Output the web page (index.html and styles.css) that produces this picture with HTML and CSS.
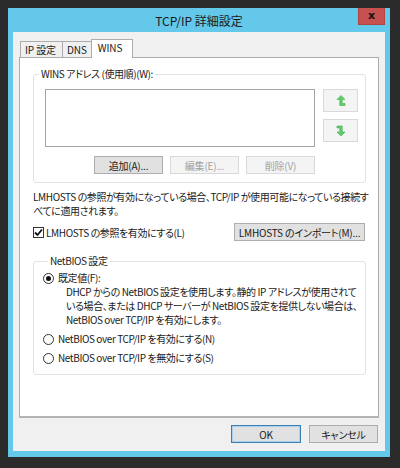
FILE: index.html
```html
<!DOCTYPE html>
<html lang="ja">
<head>
  <meta charset="UTF-8">
  <title>TCP/IP 詳細設定</title>
  <link rel="stylesheet" href="styles.css">
</head>
<body>
  <div class="window">
    <div class="titlebar">
      <span></span>
      <span class="title">TCP/IP 詳細設定</span>
      <span class="close">x</span>
    </div>

    <div class="client">
      <div class="tabs">
        <span class="tab">IP 設定</span>
        <span class="tab">DNS</span>
        <span class="tab active">WINS</span>
      </div>

      <div class="panel">
        <fieldset class="group wins">
          <legend>WINS アドレス (使用順)(W):</legend>
          <div class="wins-body">
            <div class="list-col">
              <div class="listbox"></div>
              <div class="btn-row">
                <button class="btn">追加(A)...</button>
                <button class="btn" disabled>編集(E)...</button>
                <button class="btn" disabled>削除(V)</button>
              </div>
            </div>
            <div class="order-col">
              <button class="btn order" disabled>
                <svg width="10" height="12" viewBox="0 0 10 12">
                  <path d="M5 0.5 L9 4.5 L6.2 4.5 L6.2 8.5 L9 8.5 L9 10.5 L3.8 10.5 L3.8 4.5 L1 4.5 Z" fill="#5fcf6a" stroke="#3fae4c" stroke-width="0.6"/>
                </svg>
              </button>
              <button class="btn order" disabled>
                <svg width="10" height="12" viewBox="0 0 10 12">
                  <path d="M1 1 L6.2 1 L6.2 7 L9 7 L5 11 L1 7 L3.8 7 L3.8 3 L1 3 Z" fill="#5fcf6a" stroke="#3fae4c" stroke-width="0.6"/>
                </svg>
              </button>
            </div>
          </div>
        </fieldset>

        <p class="note">LMHOSTS の参照が有効になっている場合、TCP/IP が使用可能になっている接続す<br>べてに適用されます。</p>

        <div class="lm-row">
          <label class="check">
            <span class="box">
              <svg width="9" height="9" viewBox="0 0 9 9">
                <path d="M1 4.5 L3.5 7 L8 1.5" fill="none" stroke="#111" stroke-width="1.8"/>
              </svg>
            </span>
            LMHOSTS の参照を有効にする(L)
          </label>
          <button class="btn import">LMHOSTS のインポート(M)...</button>
        </div>

        <fieldset class="group netbios">
          <legend>NetBIOS 設定</legend>
          <div class="radio checked"><span class="dot"></span>既定値(F):</div>
          <p class="desc">DHCP からの NetBIOS 設定を使用します。静的 IP アドレスが使用されて<br>いる場合、または DHCP サーバーが NetBIOS 設定を提供しない場合は、<br>NetBIOS over TCP/IP を有効にします。</p>
          <div class="radio"><span class="dot"></span>NetBIOS over TCP/IP を有効にする(N)</div>
          <div class="radio"><span class="dot"></span>NetBIOS over TCP/IP を無効にする(S)</div>
        </fieldset>
      </div>

      <div class="footer">
        <button class="btn default">OK</button>
        <button class="btn">キャンセル</button>
      </div>
    </div>
  </div>
</body>
</html>
```

FILE: styles.css
```css
body {
  margin: 0;
  background: #2b2b2b;
  font-family: "Noto Sans CJK JP", sans-serif;
  font-feature-settings: "palt";
  font-size: 10px;
  letter-spacing: -0.4px;
  color: #1a1a1a;
  white-space: nowrap;
}
.window {
  width: 382px;
  height: 449px;
  margin: 8px 0 0 8px;
  box-sizing: border-box;
  padding: 0 5px 6px 5px;
  background: #63c8ea;
  display: flex;
  flex-direction: column;
}
.titlebar {
  height: 24px;
  display: grid;
  grid-template-columns: 1fr auto 1fr;
  align-items: start;
}
.title {
  font-size: 12px;
  letter-spacing: 0;
  line-height: 14px;
  margin-top: 6px;
  color: #1a1a1a;
}
.close {
  justify-self: end;
  width: 27px;
  height: 17px;
  box-sizing: border-box;
  background: #c75050;
  border: 1px solid #b04444;
  border-top: none;
  color: #111;
  font-family: "DejaVu Sans", sans-serif;
  font-weight: bold;
  font-size: 11px;
  letter-spacing: 0;
  line-height: 15px;
  text-align: center;
}
.client {
  flex: 1;
  background: #f0f0f0;
  display: flex;
  flex-direction: column;
  padding-top: 7px;
}
.tabs {
  display: flex;
  align-items: flex-end;
  margin-left: 7px;
  margin-bottom: -1px;
  position: relative;
  z-index: 1;
}
.tab {
  height: 16px;
  box-sizing: border-box;
  margin-bottom: 1px;
  padding: 0 4px;
  border: 1px solid #acacac;
  border-bottom: none;
  background: #f0f0f0;
  line-height: 15px;
  letter-spacing: -0.1px;
}
.tab + .tab {
  margin-left: -1px;
}
.tab:first-child {
  width: 43px;
}
.tab.active {
  height: 19px;
  width: 42px;
  margin-bottom: 0;
  padding: 0 0 0 6px;
  background: #fff;
  line-height: 15px;
}
.panel {
  height: 361px;
  box-sizing: border-box;
  margin: 0 6px;
  padding: 9px 12px 0 13px;
  background: #fff;
  border: 1px solid #acacac;
  border-bottom: 2px solid #b4b4b4;
}
.group {
  margin: 0;
  padding: 0;
  border: 1px solid #dde3e8;
  border-radius: 3px;
  min-width: 0;
}
.group legend {
  margin-left: 5px;
  padding: 0 2px;
  line-height: 14px;
}
.wins-body {
  display: flex;
  padding: 8px 6px 8px 11px;
  gap: 8px;
}
.list-col {
  width: 270px;
}
.listbox {
  height: 58px;
  box-sizing: border-box;
  border: 1px solid #a3a3a3;
  background: #fff;
}
.btn-row {
  display: flex;
  justify-content: flex-end;
  gap: 7px;
  margin-top: 9px;
}
.btn {
  font: inherit;
  font-feature-settings: "palt";
  letter-spacing: -0.2px;
  height: 18px;
  width: 69px;
  box-sizing: border-box;
  padding: 0;
  border: 1px solid #adadad;
  background: #e1e1e1;
  color: #1a1a1a;
  line-height: 15px;
}
.btn:disabled {
  border-color: #d9d9d9;
  background: #f4f4f4;
  color: #a3a3a3;
}
.order-col {
  display: flex;
  flex-direction: column;
  gap: 7px;
}
.order {
  width: 35px;
  height: 23px;
  display: flex;
  align-items: center;
  justify-content: center;
}
.note {
  margin: 7px 0 0 0;
  line-height: 14px;
}
.lm-row {
  display: flex;
  align-items: center;
  justify-content: space-between;
  margin-top: 5px;
}
.check {
  display: flex;
  align-items: center;
  gap: 2px;
}
.box {
  width: 11px;
  height: 11px;
  box-sizing: border-box;
  border: 1px solid #333;
  background: #fff;
  display: flex;
  align-items: center;
  justify-content: center;
}
.import {
  width: 131px;
  margin-right: 1px;
}
.netbios {
  margin-top: 13px;
  padding: 3px 0 9px 9px;
}
.radio {
  display: flex;
  align-items: center;
  gap: 4px;
  line-height: 14px;
}
.dot {
  width: 9px;
  height: 9px;
  border: 1px solid #333;
  border-radius: 50%;
  background: #fff;
  position: relative;
}
.radio.checked .dot::after {
  content: "";
  position: absolute;
  left: 2px;
  top: 2px;
  width: 5px;
  height: 5px;
  border-radius: 50%;
  background: #111;
}
.desc {
  margin: 0 0 5px 23px;
  line-height: 14px;
}
.radio + .radio {
  margin-top: 5px;
}
.footer {
  display: flex;
  justify-content: flex-end;
  gap: 8px;
  padding: 7px 7px 8px 0;
}
.btn.default {
  width: 70px;
  border-color: #3c7fb1;
  box-shadow: inset 0 0 0 1px #a8d0ef;
}
```
